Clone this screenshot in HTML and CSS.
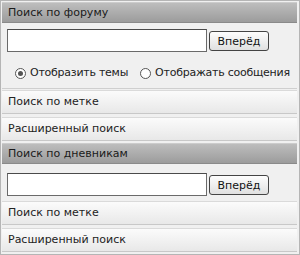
FILE: index.html
```html
<!DOCTYPE html>
<html lang="ru">
<head>
    <meta charset="UTF-8">
    <title>Поиск</title>
    <link rel="stylesheet" href="styles.css">
</head>
<body>
<div class="panel">
    <div class="head">Поиск по форуму</div>
    <div class="form">
        <input type="text" class="field">
        <button class="go">Вперёд</button>
    </div>
    <div class="opts">
        <label class="opt"><span class="radio on"></span>Отобразить темы</label>
        <label class="opt"><span class="radio"></span>Отображать сообщения</label>
    </div>
    <div class="row first">Поиск по метке</div>
    <div class="row">Расширенный поиск</div>

    <div class="head">Поиск по дневникам</div>
    <div class="form second">
        <input type="text" class="field">
        <button class="go">Вперёд</button>
    </div>
    <div class="row first">Поиск по метке</div>
    <div class="row">Расширенный поиск</div>
</div>
</body>
</html>
```
FILE: styles.css
```css
*{
    padding:0;
    margin:0;
    box-sizing:border-box;
}

body{
    font-family:"DejaVu Sans", Verdana, sans-serif;
    font-size:11px;
    color:#222;
    background:#fff;
}

.panel{
    width:300px;
    height:255px;
    border:1px solid #b5b5b5;
    padding:1px 2px 1px 1px;
    background:#f0f0f0;
}

.head{
    height:21px;
    line-height:20px;
    padding-left:6px;
    margin-bottom:2px;
    background:linear-gradient(#bdbdbd, #9c9c9c);
    border-top:1px solid #cccccc;
    border-bottom:1px solid #8a8a8a;
    color:#1a1a1a;
}

.form{
    display:flex;
    align-items:flex-end;
    gap:2px;
    padding:4px 5px 2px 5px;
}

.form.second{
    padding:7px 5px 4px 5px;
}

.field{
    width:200px;
    height:23px;
    border:1px solid #6a6a6a;
    border-top-color:#4a4a4a;
    background:#fff;
}

.go{
    width:60px;
    height:20px;
    margin-bottom:1px;
    border:1px solid #444;
    border-radius:3px;
    background:linear-gradient(#fdfdfd, #e0e0e0);
    font-family:"DejaVu Sans", Verdana, sans-serif;
    font-size:11px;
    color:#111;
}

.opts{
    display:flex;
    gap:12px;
    height:35px;
    padding:11px 0 0 13px;
    border-bottom:1px solid #cfcfcf;
    white-space:nowrap;
}

.opt{
    display:flex;
    align-items:center;
    gap:4px;
    height:16px;
    line-height:16px;
    letter-spacing:-0.25px;
}

.radio{
    flex:none;
    width:11px;
    height:11px;
    border:1px solid #555;
    border-radius:50%;
    background:#fff;
    display:flex;
    align-items:center;
    justify-content:center;
}

.radio.on::after{
    content:"";
    width:5px;
    height:5px;
    border-radius:50%;
    background:#555;
}

.row{
    height:24px;
    line-height:22px;
    padding-left:6px;
    margin-bottom:3px;
    background:linear-gradient(#fbfbfb, #e8e8e8);
    border-top:1px solid #dadada;
    border-bottom:1px solid #c8c8c8;
}

.row.first{
    margin-top:1px;
}

.row + .head{
    margin-top:-1px;
}
```
